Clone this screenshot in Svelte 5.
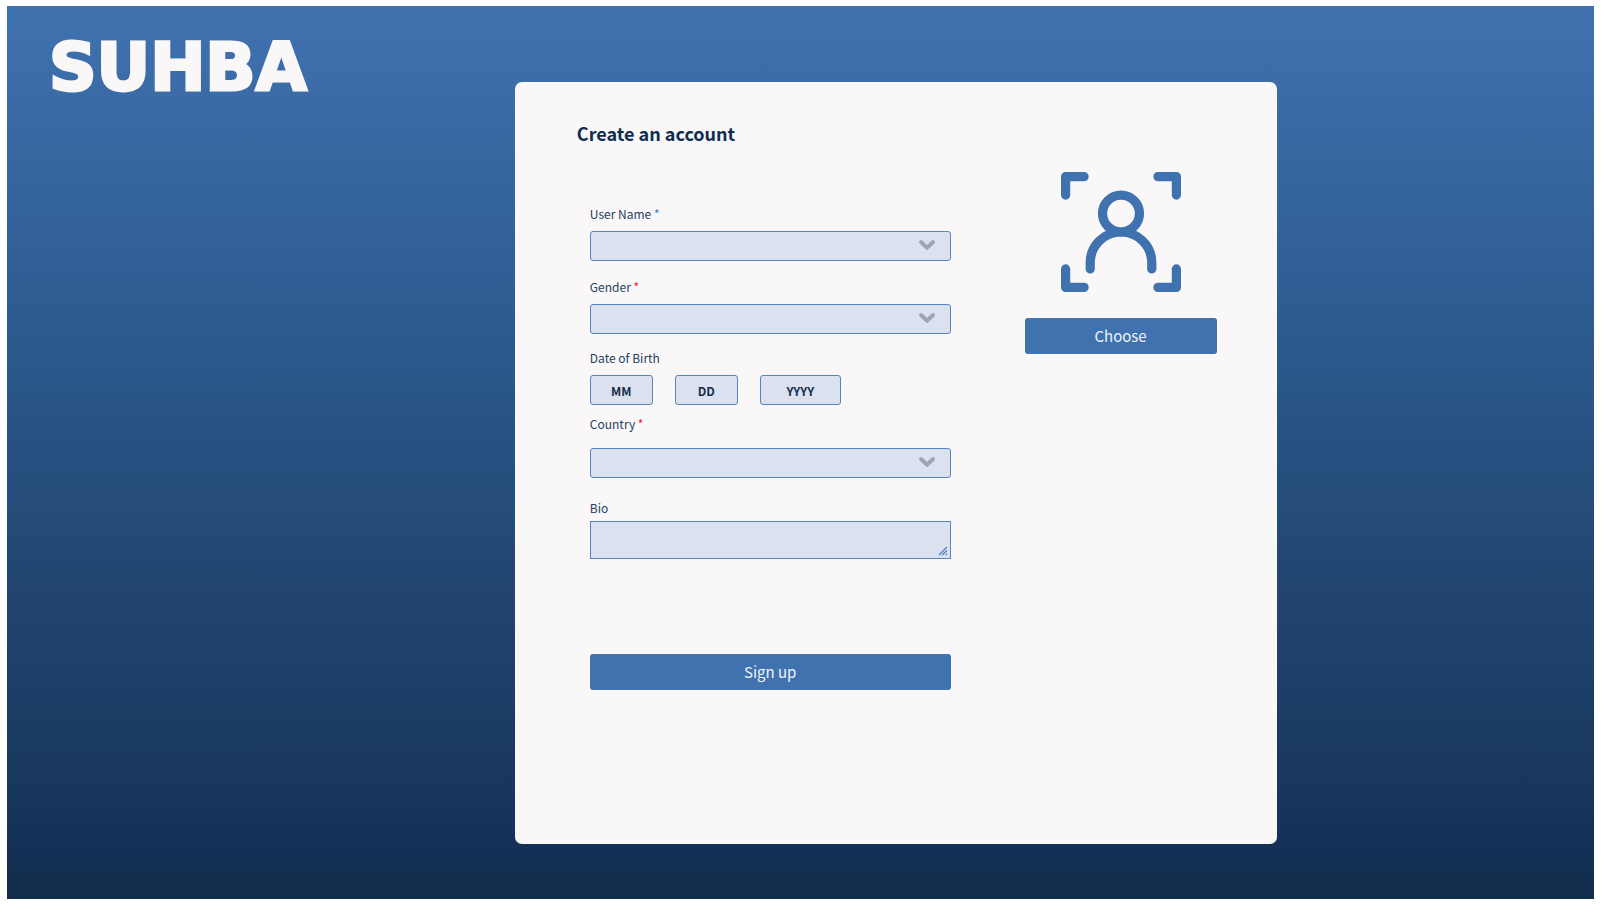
<script>
  let username = $state('');
  let gender = $state('');
  let country = $state('');
  let bio = $state('');
</script>

{#snippet chevron()}
  <svg class="chevron" viewBox="0 0 16 10" aria-hidden="true">
    <path d="M2.2 2.2 8 7.6l5.800-5.400" />
  </svg>
{/snippet}

<main class="page">
  <header class="brand">SUHBA</header>

  <section class="card">
    <h1>Create an account</h1>
    <div class="columns">
      <form onsubmit={(e) => e.preventDefault()}>
        <div class="field">
          <label for="username">User Name <span class="mark">*</span></label>
          <div class="control">
            <select id="username" bind:value={username}><option value=""></option></select>
            {@render chevron()}
          </div>
        </div>

        <div class="field gender">
          <label for="gender">Gender <span class="mark required">*</span></label>
          <div class="control">
            <select id="gender" bind:value={gender}><option value=""></option></select>
            {@render chevron()}
          </div>
        </div>

        <div class="field birth">
          <label for="month">Date of Birth</label>
          <div class="dates">
            <input id="month" class="short" placeholder="MM" aria-label="Month" />
            <input class="short" placeholder="DD" aria-label="Day" />
            <input class="long" placeholder="YYYY" aria-label="Year" />
          </div>
        </div>

        <div class="field country">
          <label for="country">Country <span class="mark required">*</span></label>
          <div class="control">
            <select id="country" bind:value={country}><option value=""></option></select>
            {@render chevron()}
          </div>
        </div>

        <div class="field bio">
          <label for="bio">Bio</label>
          <div class="control">
            <textarea id="bio" bind:value={bio}></textarea>
            <svg class="grip" viewBox="0 0 10 10" aria-hidden="true">
              <path d="M1 9 9 1M4 9 9 4.500M7.500 9 9 7.800" />
            </svg>
          </div>
        </div>

        <button class="primary" type="submit">Sign up</button>
      </form>

      <div class="photo">
        <svg class="portrait" viewBox="0 0 26 26" aria-hidden="true">
          <path d="M1 5V1h4M21 1h4v4M1 21v4h4M25 21v4h-4" />
          <circle cx="13" cy="9" r="4" />
          <path d="M6.330 21v-1.330a6.670 6.670 0 0 1 13.340 0V21" />
        </svg>
        <button class="primary" type="button">Choose</button>
      </div>
    </div>
  </section>
</main>

<style>
  :global(body) {
    background: #fff;
  }

  .page {
    box-sizing: border-box;
    min-height: calc(100vh - 12px);
    margin: 6px 16px 6px 7px;
    display: grid;
    grid-template-columns: 32% 48% 1fr;
    background: linear-gradient(#4072b0, #2e5c91 34%, #275080 50%, #21446f 67%, #17365b 89%, #132f56 95%, #132f4f 97%, #122c4a);
    font-family: "Noto Sans CJK SC", "Noto Sans", sans-serif;
    color: #0f2c50;
  }

  .brand {
    padding: 28px 0 0 42px;
    font: bold 66px/68px "DejaVu Sans", sans-serif;
    color: #f9f7f8;
    -webkit-text-stroke: 3px #f9f7f8;
  }

  .card {
    margin: 76px 0 55px;
    padding: 37px 60px 48px 62px;
    border-radius: 7px;
    background: #f9f7f8;
  }

  h1 {
    margin: 0;
    font-size: 18px;
    line-height: 28px;
    font-weight: 700;
  }

  .columns {
    display: grid;
    grid-template-columns: minmax(0, 1fr) 192px;
    column-gap: 74px;
    margin: 25px 0 0 13px;
  }

  form {
    padding-top: 32px;
  }

  .field {
    display: flex;
    flex-direction: column;
    gap: 7px;
    margin-bottom: 16px;
  }

  .gender {
    margin-bottom: 14px;
  }

  .birth {
    margin-bottom: 9px;
  }

  .country {
    gap: 14px;
    margin-bottom: 20px;
  }

  .bio {
    gap: 3px;
    margin-bottom: 95px;
  }

  label {
    font-size: 12px;
    line-height: 20px;
    color: #28415f;
  }

  .mark {
    color: #3f7cc4;
  }

  .required {
    color: #ff1414;
  }

  .control {
    position: relative;
    display: flex;
  }

  select,
  input,
  textarea {
    box-sizing: border-box;
    width: 100%;
    height: 30px;
    margin: 0;
    padding: 0 8px;
    border: 1px solid #5585c0;
    border-radius: 3px;
    background: #dbe1ee;
    color: inherit;
    font-family: inherit;
    font-size: 12px;
    appearance: none;
  }

  textarea {
    height: 38px;
    border-radius: 0;
    resize: none;
  }

  .dates {
    display: flex;
  }

  .dates input {
    font-weight: 700;
    text-align: center;
    padding: 0;
  }

  .dates input::placeholder {
    color: #14304f;
    opacity: 1;
  }

  .dates .short {
    width: 63px;
    margin-right: 22px;
  }

  .dates .long {
    width: 81px;
  }

  .chevron {
    position: absolute;
    right: 16px;
    top: 9px;
    width: 16px;
    height: 10px;
    fill: none;
    stroke: #9ea5b2;
    stroke-width: 4;
    stroke-linecap: round;
    pointer-events: none;
  }

  .grip {
    position: absolute;
    right: 3px;
    bottom: 3px;
    width: 10px;
    height: 10px;
    fill: none;
    stroke: #4c7fc0;
    stroke-width: 1.200;
    pointer-events: none;
  }

  .primary {
    display: block;
    width: 100%;
    height: 36px;
    padding: 0 0 1px;
    border: 0;
    border-radius: 3px;
    background: #4072b0;
    color: #f0f3f8;
    font-family: inherit;
    font-size: 15px;
    line-height: 24px;
  }

  .photo {
    display: flex;
    flex-direction: column;
    align-items: center;
    gap: 26px;
  }

  .portrait {
    width: 120px;
    height: 120px;
    fill: none;
    stroke: #4072b0;
    stroke-width: 2;
    stroke-linecap: round;
    stroke-linejoin: round;
  }
</style>
